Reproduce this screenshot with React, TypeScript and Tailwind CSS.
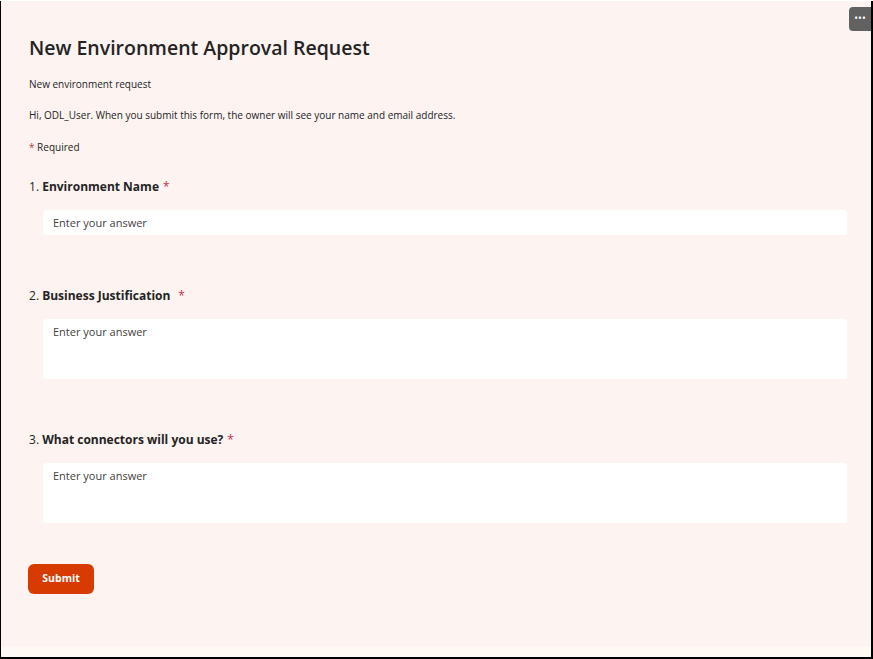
import React from "react";

const font = { fontFamily: '"Open Sans", "Noto Sans", sans-serif' };

function Question({ n, label, gap, tall }: { n: number; label: string; gap?: boolean; tall?: boolean }) {
  return (
    <div className="flex flex-col">
      <div className="flex items-baseline text-[12px] text-[#242424] leading-[18px]">
        <span>{n}.&nbsp;</span>
        <span className="font-bold">{label}</span>
        <span className={`text-[#c4314b] ${gap ? "ml-[8px]" : "ml-[4px]"}`}>*</span>
      </div>
      <div className={`mt-[14px] ml-[14px] bg-white rounded-[4px] ${tall ? "h-[60px] pt-[4px]" : "h-[25px] flex items-center"} px-[10px]`}>
        <span className="block text-[11px] text-[#424242] leading-[18px]">Enter your answer</span>
      </div>
    </div>
  );
}

export default function App() {
  return (
    <div style={font} className="w-[873px] h-[659px] bg-black">
      <div className="relative w-[870px] h-[656px] ml-[1px] mt-[1px] bg-[#fdf3f1] flex flex-col">
        <div className="absolute right-0 top-[6px] w-[22px] h-[24px] bg-[#616161] rounded-l-[4px] flex items-center justify-center text-white text-[10px] leading-none pb-[3px]">
          •••
        </div>
        <div className="flex-1 flex flex-col pl-[28px] pr-[24px]">
          <h1 className="mt-[33px] text-[19.5px] font-semibold text-[#242424] leading-[28px]">
            New Environment Approval Request
          </h1>
          <p className="mt-[14px] text-[10px] text-[#242424] leading-[16px]">New environment request</p>
          <p className="mt-[15px] text-[10px] text-[#242424] leading-[16px]">
            Hi, ODL_User. When you submit this form, the owner will see your name and email address.
          </p>
          <p className="mt-[16px] text-[10px] text-[#242424] leading-[16px]">
            <span className="text-[#c4314b]">*</span> Required
          </p>
          <div className="mt-[23px] flex flex-col gap-[52px]">
            <Question n={1} label="Environment Name" />
            <Question n={2} label="Business Justification" gap tall />
            <Question n={3} label="What connectors will you use?" tall />
          </div>
          <div className="mt-[41px] -ml-[1px]">
            <button className="w-[66px] h-[30px] bg-[#d83b01] rounded-[6px] text-white text-[10.5px] font-bold">
              Submit
            </button>
          </div>
        </div>
        <div className="h-[10px] bg-[#fefaf3]" />
      </div>
    </div>
  );
}
